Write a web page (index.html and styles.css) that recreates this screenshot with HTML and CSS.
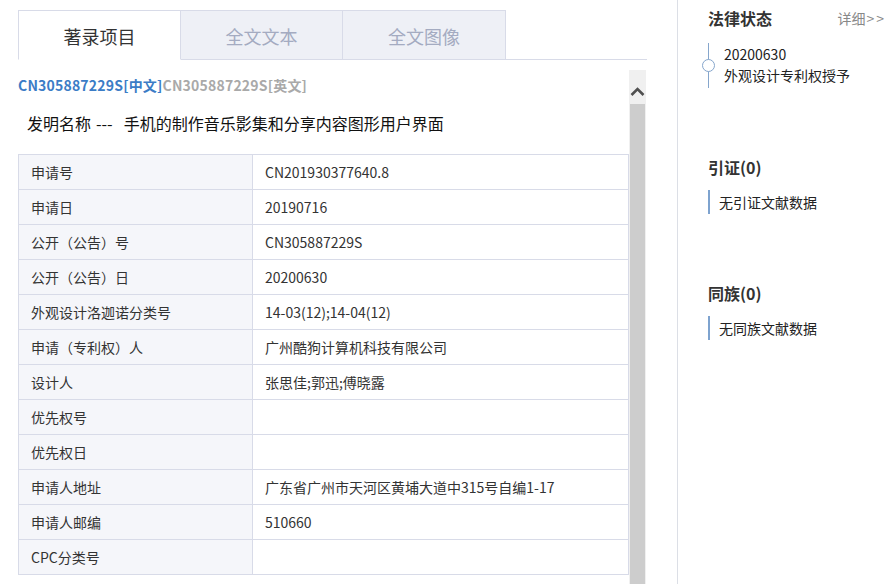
FILE: index.html
```html
<!DOCTYPE html>
<html lang="zh">
<head>
<meta charset="utf-8">
<title>著录项目</title>
<link rel="stylesheet" href="styles.css">
</head>
<body>
<div class="page">
  <div class="main">
    <div class="tabs">
      <div class="tab active">著录项目</div>
      <div class="tab">全文文本</div>
      <div class="tab">全文图像</div>
    </div>
    <div class="panel">
      <div class="content">
        <div class="pn"><span class="cn">CN305887229S<span>[中文]</span></span><span class="en">CN305887229S<span>[英文]</span></span></div>
        <div class="title">发明名称<span class="sep">---</span>手机的制作音乐影集和分享内容图形用户界面</div>
        <table class="info">
          <tr><td class="lbl">申请号</td><td>CN201930377640.8</td></tr>
          <tr><td class="lbl">申请日</td><td>20190716</td></tr>
          <tr><td class="lbl">公开（公告）号</td><td>CN305887229S</td></tr>
          <tr><td class="lbl">公开（公告）日</td><td>20200630</td></tr>
          <tr><td class="lbl">外观设计洛迦诺分类号</td><td>14-03(12);14-04(12)</td></tr>
          <tr><td class="lbl">申请（专利权）人</td><td>广州酷狗计算机科技有限公司</td></tr>
          <tr><td class="lbl">设计人</td><td>张思佳;郭迅;傅晓露</td></tr>
          <tr><td class="lbl">优先权号</td><td></td></tr>
          <tr><td class="lbl">优先权日</td><td></td></tr>
          <tr><td class="lbl">申请人地址</td><td>广东省广州市天河区黄埔大道中315号自编1-17</td></tr>
          <tr><td class="lbl">申请人邮编</td><td>510660</td></tr>
          <tr><td class="lbl">CPC分类号</td><td></td></tr>
        </table>
      </div>
      <div class="scrollbar">
        <div class="arrow"><svg width="17" height="34" viewBox="0 0 17 34"><polyline points="2.5,25 8.5,19 14.5,25" fill="none" stroke="#505050" stroke-width="2.6"/></svg></div>
        <div class="thumb"></div>
      </div>
    </div>
  </div>
  <div class="side">
    <div class="head"><span class="h">法律状态</span><span class="more">详细<span class="gt">&gt;&gt;</span></span></div>
    <div class="timeline">
      <div class="dot"></div>
      <div class="tl-text">
        <div>20200630</div>
        <div>外观设计专利权授予</div>
      </div>
    </div>
    <div class="head sec"><span class="h">引证(0)</span></div>
    <div class="bar">无引证文献数据</div>
    <div class="head sec"><span class="h">同族(0)</span></div>
    <div class="bar">无同族文献数据</div>
  </div>
</div>
</body>
</html>
```

FILE: styles.css
```css
* { box-sizing: border-box; }
html, body { margin: 0; padding: 0; background: #fff; }
body {
  font-family: "Noto Sans CJK SC", "Noto Sans", sans-serif;
  color: #333;
  width: 896px;
  height: 584px;
  overflow: hidden;
}
.page { display: flex; height: 584px; }
.main { width: 647px; padding-left: 18px; flex: none; display: flex; flex-direction: column; }
.tabs {
  margin-top: 10px;
  height: 50px;
  display: flex;
  border-bottom: 1px solid #d8dbe8;
}
.tab {
  width: 162px;
  height: 50px;
  border: 1px solid #d8dbe8;
  border-left: none;
  background: #eef0f6;
  color: #a4abc1;
  font-size: 18px;
  display: flex;
  align-items: center;
  justify-content: center;
  padding-top: 1px;
}
.tab.active {
  border-left: 1px solid #d8dbe8;
  border-bottom-color: #fff;
  background: #fff;
  color: #333;
  width: 163px;
}
.tab:last-child { width: 163px; }
.panel { display: flex; flex: 1; padding-top: 10px; }
.content { width: 611px; flex: none; padding-top: 5px; }
.pn { font-size: 14px; font-weight: bold; line-height: 20px; white-space: nowrap; letter-spacing: 0.2px; }
.pn .cn { color: #3b7cc6; }
.pn .en { color: #a9a9a9; }
.title {
  margin-top: 17px;
  padding-left: 9px;
  font-size: 16px;
  line-height: 22px;
  color: #111;
}
.title .sep { margin: 0 11px 0 5px; }
.info {
  margin-top: 20px;
  width: 611px;
  border-collapse: collapse;
  font-size: 14px;
  color: #333;
}
.info td {
  border: 1px solid #d8dbe8;
  height: 35px;
  padding: 0 0 0 12px;
  line-height: 20px;
}
.info td.lbl { width: 234px; background: #f5f6fa; }
.scrollbar {
  width: 17px;
  flex: none;
  background: #f0f0f0;
  display: flex;
  flex-direction: column;
}
.arrow { height: 34px; }
.arrow svg { display: block; }
.thumb { flex: 1; margin: 0 1px; background: #cdcdcd; }
.side {
  margin-left: 30px;
  border-left: 1px solid #dcdfe6;
  flex: 1;
  padding-left: 30px;
  padding-right: 10px;
  padding-top: 7px;
}
.head { display: flex; justify-content: space-between; align-items: center; height: 22px; }
.head .h { font-size: 16px; font-weight: bold; color: #333; }
.head .more { font-size: 14px; color: #888; }
.head .more .gt { letter-spacing: 2px; margin-left: 1px; }
.head.sec { margin-top: 68px; }
.timeline {
  position: relative;
  margin-top: 14px;
  height: 45px;
  border-left: 1px solid #86a6cc;
  padding-left: 15px;
}
.dot {
  position: absolute;
  left: -7px;
  top: 16px;
  width: 13px;
  height: 13px;
  border: 1.5px solid #86a6cc;
  border-radius: 50%;
  background: #fff;
}
.tl-text { font-size: 14px; line-height: 21px; color: #222; padding-top: 1px; }
.bar {
  margin-top: 12px;
  height: 24px;
  border-left: 2px solid #7ea3cf;
  padding-left: 9px;
  font-size: 14px;
  line-height: 24px;
  color: #222;
}
```
